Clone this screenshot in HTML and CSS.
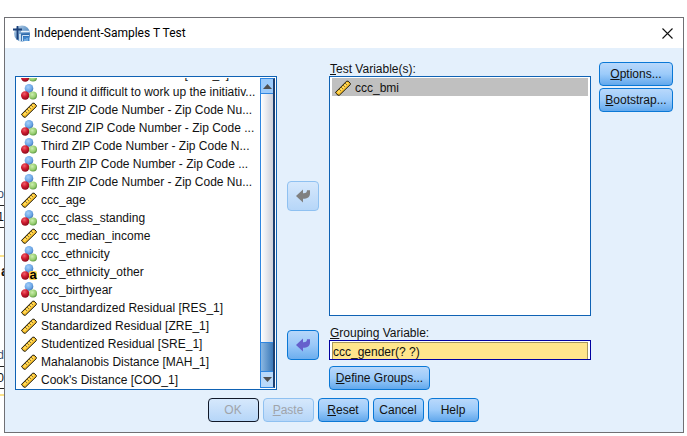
FILE: index.html
```html
<!DOCTYPE html>
<html lang="en">
<head>
<meta charset="utf-8">
<title>Independent-Samples T Test</title>
<link rel="stylesheet" href="styles.css">
</head>
<body>
<svg class="defs" width="0" height="0" aria-hidden="true">
  <defs>
    <radialGradient id="gb" cx=".4" cy=".35" r=".7"><stop offset="0" stop-color="#a4cffa"/><stop offset=".65" stop-color="#6ba6e6"/><stop offset="1" stop-color="#3a6db0"/></radialGradient>
    <radialGradient id="gr" cx=".4" cy=".3" r=".7"><stop offset="0" stop-color="#f0606c"/><stop offset=".5" stop-color="#cf1c30"/><stop offset="1" stop-color="#8c0c1c"/></radialGradient>
    <radialGradient id="gg" cx=".4" cy=".35" r=".7"><stop offset="0" stop-color="#cdeeb0"/><stop offset=".65" stop-color="#94cc6c"/><stop offset="1" stop-color="#4c8838"/></radialGradient>
    <linearGradient id="globe" x1="0" y1="0" x2="1" y2="1"><stop offset="0" stop-color="#c5d8ea"/><stop offset=".5" stop-color="#6c9ccb"/><stop offset="1" stop-color="#1f66ae"/></linearGradient>
    <symbol id="nominal" viewBox="0 0 16 16">
      <circle cx="8" cy="4.400" r="4.300" fill="url(#gb)"/>
      <circle cx="4.200" cy="11.500" r="4.200" fill="url(#gr)"/>
      <circle cx="12" cy="11.600" r="4" fill="url(#gg)"/>
    </symbol>
    <symbol id="scale" viewBox="0 0 16 16">
      <path d="M.7 12.200 11.600 1.200H13.200L15.300 3.400V4.600L4.400 15.200H3L.7 13Z" fill="#fac22e" stroke="#1c1708" stroke-width="1"/>
      <path d="M3 12.700 12.800 3" stroke="#ffdf6a" stroke-width="1.500"/>
      <path d="m4.500 9.500 1 1M6.500 7.500l1 1M8.500 5.500l1 1M10.500 3.500l1 1" stroke="#1c1708" stroke-width="1"/>
    </symbol>
    <symbol id="arrow" viewBox="0 0 14 14">
      <path d="M0 7 7 .5V4.300C10 4.500 11 3 11 1.200H14V4.500C14 8 11.500 9.800 7 9.800V13.500Z"/>
    </symbol>
  </defs>
</svg>
<div class="desktop">
  <div class="behind" aria-hidden="true">
    <div class="cell head">o</div>
    <div class="cell value">1</div>
    <div class="mark"></div>
    <div class="cell bold">a</div>
    <div class="cell head second">d</div>
    <div class="cell value">0</div>
    <div class="mark near"></div>
  </div>
  <main class="dialog">
    <header class="titlebar">
      <svg class="logo" viewBox="0 0 17 17" aria-hidden="true">
        <circle cx="9" cy="8.500" r="8" fill="url(#globe)"/>
        <path d="M8 6.500H16.500M7 9V16" stroke="#eaf3fb" stroke-width="1.500"/>
        <path d="M8 8.500H16.500V12.500H10V16H8.500Z" fill="#2c69ab"/>
        <path d="M9.500 10.500H16M9.500 10.500V16" stroke="#cfe3f5" stroke-width="1"/>
        <path d="M10.500 11.500H16.500V16H10.500Z" fill="#3f86cc"/>
        <path d="M12 16v-2M14 16v-3" stroke="#9dc9f1" stroke-width="1"/>
        <path d="M0 4.500H9M4.500 1V14.500" stroke="#1b3f78" stroke-width="1.800"/>
      </svg>
      <h1>Independent-Samples T Test</h1>
      <button class="close" aria-label="Close"><svg viewBox="0 0 11 11"><path d="m.5.5 10 10M10.500.5l-10 10" stroke="#111" stroke-width="1.100"/></svg></button>
    </header>
    <div class="content">
      <div class="panes">
        <div class="box source">
          <ul class="rows">
            <li><svg><use href="#nominal"/></svg>I found it hard to wind dow [DAS_1]</li>
            <li><svg><use href="#nominal"/></svg>I found it difficult to work up the initiativ...</li>
            <li><svg><use href="#scale"/></svg>First ZIP Code Number - Zip Code Nu...</li>
            <li><svg><use href="#nominal"/></svg>Second ZIP Code Number - Zip Code ...</li>
            <li><svg><use href="#nominal"/></svg>Third ZIP Code Number - Zip Code N...</li>
            <li><svg><use href="#nominal"/></svg>Fourth ZIP Code Number - Zip Code ...</li>
            <li><svg><use href="#nominal"/></svg>Fifth ZIP Code Number - Zip Code Nu...</li>
            <li><svg><use href="#scale"/></svg>ccc_age</li>
            <li><svg><use href="#nominal"/></svg>ccc_class_standing</li>
            <li><svg><use href="#scale"/></svg>ccc_median_income</li>
            <li><svg><use href="#nominal"/></svg>ccc_ethnicity</li>
            <li><svg><use href="#nominal"/></svg><b class="string">a</b>ccc_ethnicity_other</li>
            <li><svg><use href="#nominal"/></svg>ccc_birthyear</li>
            <li><svg><use href="#scale"/></svg>Unstandardized Residual [RES_1]</li>
            <li><svg><use href="#scale"/></svg>Standardized Residual [ZRE_1]</li>
            <li><svg><use href="#scale"/></svg>Studentized Residual [SRE_1]</li>
            <li><svg><use href="#scale"/></svg>Mahalanobis Distance [MAH_1]</li>
            <li><svg><use href="#scale"/></svg>Cook's Distance [COO_1]</li>
          </ul>
          <div class="scrollbar">
            <button class="step up" aria-label="Scroll up"><svg viewBox="0 0 9 5"><path d="M0 5 4.500 0 9 5Z"/></svg></button>
            <div class="track"></div>
            <div class="thumb"></div>
            <button class="step" aria-label="Scroll down"><svg viewBox="0 0 9 5"><path d="M0 0H9L4.500 5Z"/></svg></button>
          </div>
        </div>
        <button class="move to-test" aria-label="Move test variable" disabled><svg><use href="#arrow"/></svg></button>
        <button class="move to-group" aria-label="Move grouping variable"><svg><use href="#arrow"/></svg></button>
        <div class="label test-label" id="test-label"><u>T</u>est Variable(s):</div>
        <ul class="box target" aria-labelledby="test-label">
          <li class="selected"><svg><use href="#scale"/></svg>ccc_bmi</li>
        </ul>
        <label class="label group-label" for="grouping"><u>G</u>rouping Variable:</label>
        <div class="field"><input id="grouping" type="text" value="ccc_gender(? ?)"></div>
        <button class="btn define"><span><u>D</u>efine Groups...</span></button>
      </div>
      <div class="side">
        <button class="btn"><span><u>O</u>ptions...</span></button>
        <button class="btn"><span><u>B</u>ootstrap...</span></button>
      </div>
    </div>
    <footer class="actions">
      <button class="btn default" disabled>OK</button>
      <button class="btn" disabled><span><u>P</u>aste</span></button>
      <button class="btn"><span><u>R</u>eset</span></button>
      <button class="btn">Cancel</button>
      <button class="btn">Help</button>
    </footer>
  </main>
</div>
</body>
</html>
```
FILE: styles.css
```css
* { box-sizing: border-box; }
body {
  margin: 0;
  background: #fff;
  color: #111;
  font: 12px/14px "Liberation Sans", Arial, sans-serif;
}
button, input { font: inherit; color: inherit; margin: 0; }
ul { list-style: none; margin: 0; padding: 0; }
.defs { position: absolute; }
.desktop { display: flex; padding-right: 3px; }

.behind { width: 4px; overflow: hidden; padding-top: 186px; }
.cell { display: flex; justify-content: flex-end; height: 20px; line-height: 16px; }
.head { color: #3c5070; border-bottom: 1px solid #222; }
.value { height: 22px; line-height: 22px; border-bottom: 1px solid #222; }
.mark { height: 2px; margin-top: 27px; background: #fbe28a; }
.mark.near { margin-top: 5px; }
.bold { justify-content: flex-start; padding-left: 1px; margin-top: 6px; font-weight: bold; font-size: 14px; }
.second { margin-top: 64px; }

.dialog {
  flex: 1;
  min-width: 0;
  margin: 17px 0 3px;
  border: 1px solid #707074;
  background: #e4f0fc;
}
.titlebar { display: flex; align-items: center; height: 30px; padding: 0 10px 0 8px; background: #fff; }
.logo { width: 17px; height: 17px; margin-right: 4px; }
h1 { flex: 1; margin: 0; font: 12px/16px Roboto, "Open Sans", sans-serif; color: #000; }
.close { display: flex; padding: 0; border: 0; background: none; }
.close svg { width: 11px; height: 11px; }

.content { display: flex; gap: 8px; padding: 14px 10px 0; }
.panes {
  flex: 1;
  min-width: 0;
  display: grid;
  grid-template-columns: minmax(0, 1fr) 32px minmax(0, 1fr);
  grid-template-rows: 14px 240px 24px 20px 30px;
  column-gap: 10px;
}
.box { border: 1px solid #0f62b4; background: #fff; padding: 1px; }
.source { grid-area: 2 / 1 / 6 / 2; display: flex; min-height: 0; }
.rows { flex: 1; min-width: 0; display: flex; flex-direction: column; justify-content: flex-end; overflow: hidden; }
li { position: relative; flex: none; display: flex; align-items: center; height: 18px; padding-left: 4px; line-height: 16px; white-space: nowrap; }
li svg { flex: none; width: 16px; height: 16px; margin-right: 4px; }
.rows li { padding-top: 2px; }
.string {
  position: absolute;
  left: 12px;
  bottom: 0;
  width: 8px;
  height: 9px;
  border-radius: 2px;
  background: #fbd34e;
  color: #000;
  font-size: 13px;
  line-height: 7px;
  text-align: center;
}
.scrollbar { width: 15px; display: flex; flex-direction: column; border: 1px solid #2f86e0; border-right: 2px solid #1c3f70; }
.step { display: flex; align-items: center; justify-content: center; height: 15px; padding: 0; border: 0; background: #b9d9fa; }
.step svg { width: 9px; height: 5px; fill: #505050; }
.up { background: #9ccbfb; border-bottom: 1px solid #2f86e0; }
.track { flex: 1; background: linear-gradient(90deg, #fff, #cdd0da); }
.thumb { height: 30px; border: solid #2f86e0; border-width: 1px 0; background: linear-gradient(90deg, #8cb8e2, #3a78b8); }

.move {
  display: flex;
  align-items: center;
  justify-content: center;
  grid-column: 2;
  height: 30px;
  padding: 0;
  border: 1px solid #0a78d6;
  border-radius: 4px;
  background: linear-gradient(#b7d7fa, #9ac8f8 50%, #6caeee);
}
.move svg { width: 14px; height: 14px; fill: #6660cc; }
.move:disabled { border-color: #8fc1f1; background: linear-gradient(#d6e8fc, #b6d6f8); }
.move:disabled svg { fill: #808080; }
.to-test { grid-row: 2; align-self: center; }
.to-group { grid-row: 3 / 5; align-self: end; }

.label { grid-column: 3; padding-left: 1px; }
.test-label { grid-row: 1; }
.group-label { grid-row: 3; align-self: end; }
.target { grid-area: 2 / 3; padding-right: 2px; }
.target li { margin-left: 1px; padding: 1px 0 0 3px; }
.target svg { margin-right: 4px; }
.selected { background: #c0c0c0; }
.field { grid-area: 4 / 3; padding: 1px 2px; border: 1px solid #0000a0; background: #fff; }
.field input {
  display: block;
  width: 100%;
  height: 17px;
  padding: 1px 0 0;
  border: 1px solid #a8985c;
  border-bottom: 0;
  background: #ffe58c;
  outline: 0;
}

.btn {
  display: flex;
  align-items: center;
  justify-content: center;
  height: 24px;
  padding: 0;
  white-space: nowrap;
  border: 1px solid #0a78d6;
  border-radius: 4px;
  background: linear-gradient(#b9d8fb, #9ccbfa 50%, #62a8ec);
}
.btn:disabled { border-color: #8fc1f1; background: linear-gradient(#d6e8fc, #b6d6f8); color: #a0a4aa; }
.btn.default { border: 1px solid #101828; }
.define { grid-area: 5 / 3; align-self: end; justify-self: start; width: 101px; }
.side { width: 74px; display: flex; flex-direction: column; gap: 2px; }
.actions { display: flex; justify-content: center; gap: 4px; padding: 8px 2px 10px 0; }
.actions .btn { width: 51px; }
```
